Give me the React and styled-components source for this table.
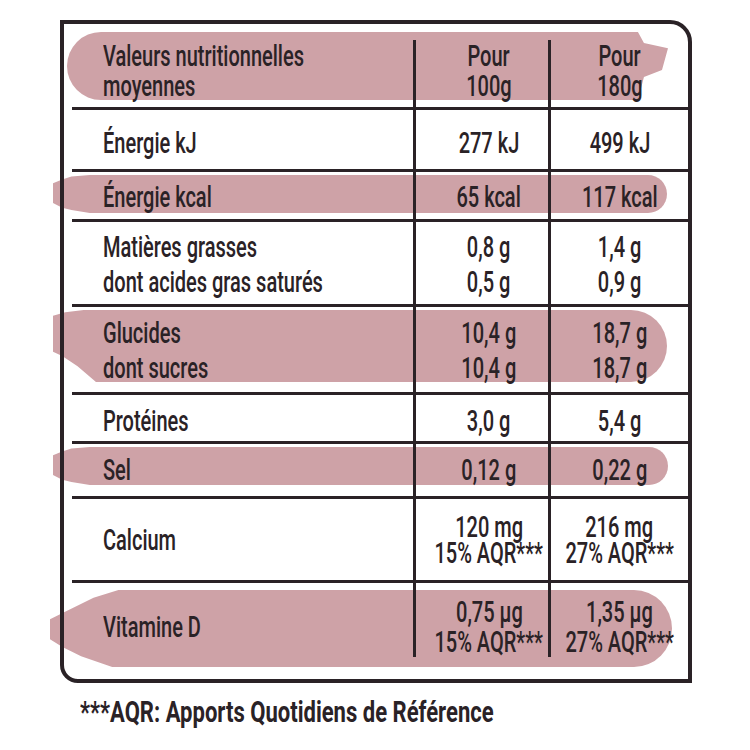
import React from 'react';
import styled, { createGlobalStyle } from 'styled-components';

const INK = '#2a2226';
const PINK = '#cea2a7';
const SQUEEZE = 0.69;

const GlobalStyle = createGlobalStyle`
  body {
    margin: 0;
    background: #fff;
  }
`;

const Page = styled.div`
  width: 750px;
  height: 750px;
  box-sizing: border-box;
  padding: 20px 0 0 60px;
  font-family: Roboto, "Liberation Sans", sans-serif;
  font-weight: 500;
  font-size: 29px;
  color: ${INK};
`;

const Frame = styled.div`
  position: relative;
  z-index: 0;
  width: 632px;
  box-sizing: border-box;
  padding: 20px 4px 26px 12px;

  &::after {
    content: '';
    position: absolute;
    inset: 0;
    border: 4px solid ${INK};
    border-radius: 0 22px 0 18px;
    pointer-events: none;
  }
`;

const Row = styled.div`
  position: relative;
  display: grid;
  grid-template-columns: 341px 135px 1fr;
  height: ${props => props.$h}px;
  box-sizing: border-box;
  border-top: ${props => (props.$first ? 'none' : `3px solid ${INK}`)};
`;

const Stripe = styled.span`
  position: absolute;
  z-index: -1;
  background: ${PINK};
  left: ${props => props.$left}px;
  top: ${props => props.$top}px;
  width: ${props => props.$width}px;
  height: ${props => props.$height}px;
  border-radius: ${props => props.$radius};
  clip-path: ${props => props.$clip || 'none'};
`;

const Cell = styled.div`
  display: flex;
  flex-direction: column;
  justify-content: center;
  box-sizing: border-box;
  min-width: 0;
  white-space: nowrap;
  padding-top: ${props => Math.max(0, props.$shift * 2)}px;
  padding-bottom: ${props => Math.max(0, -props.$shift * 2)}px;
`;

const LabelCell = styled(Cell)`
  padding-left: 31px;
  align-items: flex-start;
`;

const ValueCell = styled(Cell)`
  border-left: 3px solid ${INK};
  align-items: center;
  padding-left: ${props => props.$inset || 0}px;
`;

const Line = styled.span`
  display: block;
  line-height: ${props => props.$lh}px;
  transform: scaleX(${SQUEEZE});
  transform-origin: ${props => props.$origin};
`;

const Footnote = styled.div`
  margin: 14px 0 0 20px;
  font-weight: 700;
  line-height: 30px;
  white-space: nowrap;
  transform: scaleX(0.76);
  transform-origin: left center;
`;

const brush = 'polygon(0 22%, 1.5% 12%, 3% 4%, 6% 0, 100% 0, 100% 100%, 6% 100%, 3% 92%, 1.5% 86%, 0 74%)';

const stripes = {
  head: {
    left: -5, top: -8, width: 601, height: 68,
    radius: '34px 0 0 34px',
    clip: 'polygon(0 0, 95% 0, 96% 16%, 100% 24%, 99% 56%, 96% 66%, 95% 100%, 0 100%)',
  },
  kcal: { left: -19, top: 3, width: 614, height: 38, radius: '4px 19px 19px 4px', clip: brush },
  carbs: {
    left: -19, top: 3, width: 614, height: 72,
    radius: '4px 36px 36px 4px / 4px 50% 50% 4px',
    clip: 'polygon(0 8%, 2% 3%, 5% 0, 100% 0, 100% 100%, 7% 100%, 4% 78%, 1.5% 64%, 0 58%)',
  },
  salt: { left: -19, top: 3, width: 615, height: 38, radius: '4px 19px 19px 4px', clip: brush },
  vitd: {
    left: -22, top: 7, width: 622, height: 77,
    radius: '4px 38px 38px 4px / 4px 50% 50% 4px',
    clip: 'polygon(0 38%, 3% 26%, 7% 10%, 11% 0, 100% 0, 100% 100%, 10% 100%, 5% 86%, 2% 74%, 0 64%)',
  },
};

const rows = [
  { id: 'head', h: 67, first: true, shift: -3, lh: 30, label: ['Valeurs nutritionnelles', 'moyennes'], a: ['Pour', '100g'], b: ['Pour', '180g'], stripe: 'head' },
  { id: 'kj', h: 62, shift: 3, lh: 30, label: ['Énergie kJ'], a: ['277 kJ'], b: ['499 kJ'] },
  { id: 'kcal', h: 50, shift: 1, lh: 30, label: ['Énergie kcal'], a: ['65 kcal'], b: ['117 kcal'], stripe: 'kcal' },
  { id: 'fat', h: 85, shift: 2, lh: 35, label: ['Matières grasses', 'dont acides gras saturés'], a: ['0,8 g', '0,5 g'], b: ['1,4 g', '0,9 g'] },
  { id: 'carbs', h: 88, shift: 1, lh: 35, label: ['Glucides', 'dont sucres'], a: ['10,4 g', '10,4 g'], b: ['18,7 g', '18,7 g'], stripe: 'carbs' },
  { id: 'prot', h: 49, shift: 3, lh: 30, label: ['Protéines'], a: ['3,0 g'], b: ['5,4 g'] },
  { id: 'salt', h: 55, shift: 0, lh: 30, label: ['Sel'], a: ['0,12 g'], b: ['0,22 g'], stripe: 'salt' },
  { id: 'calc', h: 84, shift: 0, lh: 26, label: ['Calcium'], a: ['120 mg', '15% AQR***'], b: ['216 mg', '27% AQR***'] },
  { id: 'vitd', h: 77, shift: 7, lh: 30, label: ['Vitamine D'], a: ['0,75 µg', '15% AQR***'], b: ['1,35 µg', '27% AQR***'], stripe: 'vitd' },
];

const Lines = ({ items, lh, origin }) =>
  items.map(t => <Line key={t} $lh={lh} $origin={origin}>{t}</Line>);

const NutritionRow = ({ row }) => {
  const s = row.stripe && stripes[row.stripe];
  return (
    <Row $h={row.h} $first={row.first}>
      {s && (
        <Stripe
          $left={s.left}
          $top={s.top}
          $width={s.width}
          $height={s.height}
          $radius={s.radius}
          $clip={s.clip}
        />
      )}
      <LabelCell $shift={row.shift}>
        <Lines items={row.label} lh={row.lh} origin="left center" />
      </LabelCell>
      <ValueCell $shift={row.shift} $inset={14}>
        <Lines items={row.a} lh={row.lh} origin="center" />
      </ValueCell>
      <ValueCell $shift={row.shift}>
        <Lines items={row.b} lh={row.lh} origin="center" />
      </ValueCell>
    </Row>
  );
};

export default function App() {
  return (
    <>
      <GlobalStyle />
      <Page>
        <Frame>
          {rows.map(row => <NutritionRow key={row.id} row={row} />)}
        </Frame>
        <Footnote>***AQR: Apports Quotidiens de Référence</Footnote>
      </Page>
    </>
  );
}
